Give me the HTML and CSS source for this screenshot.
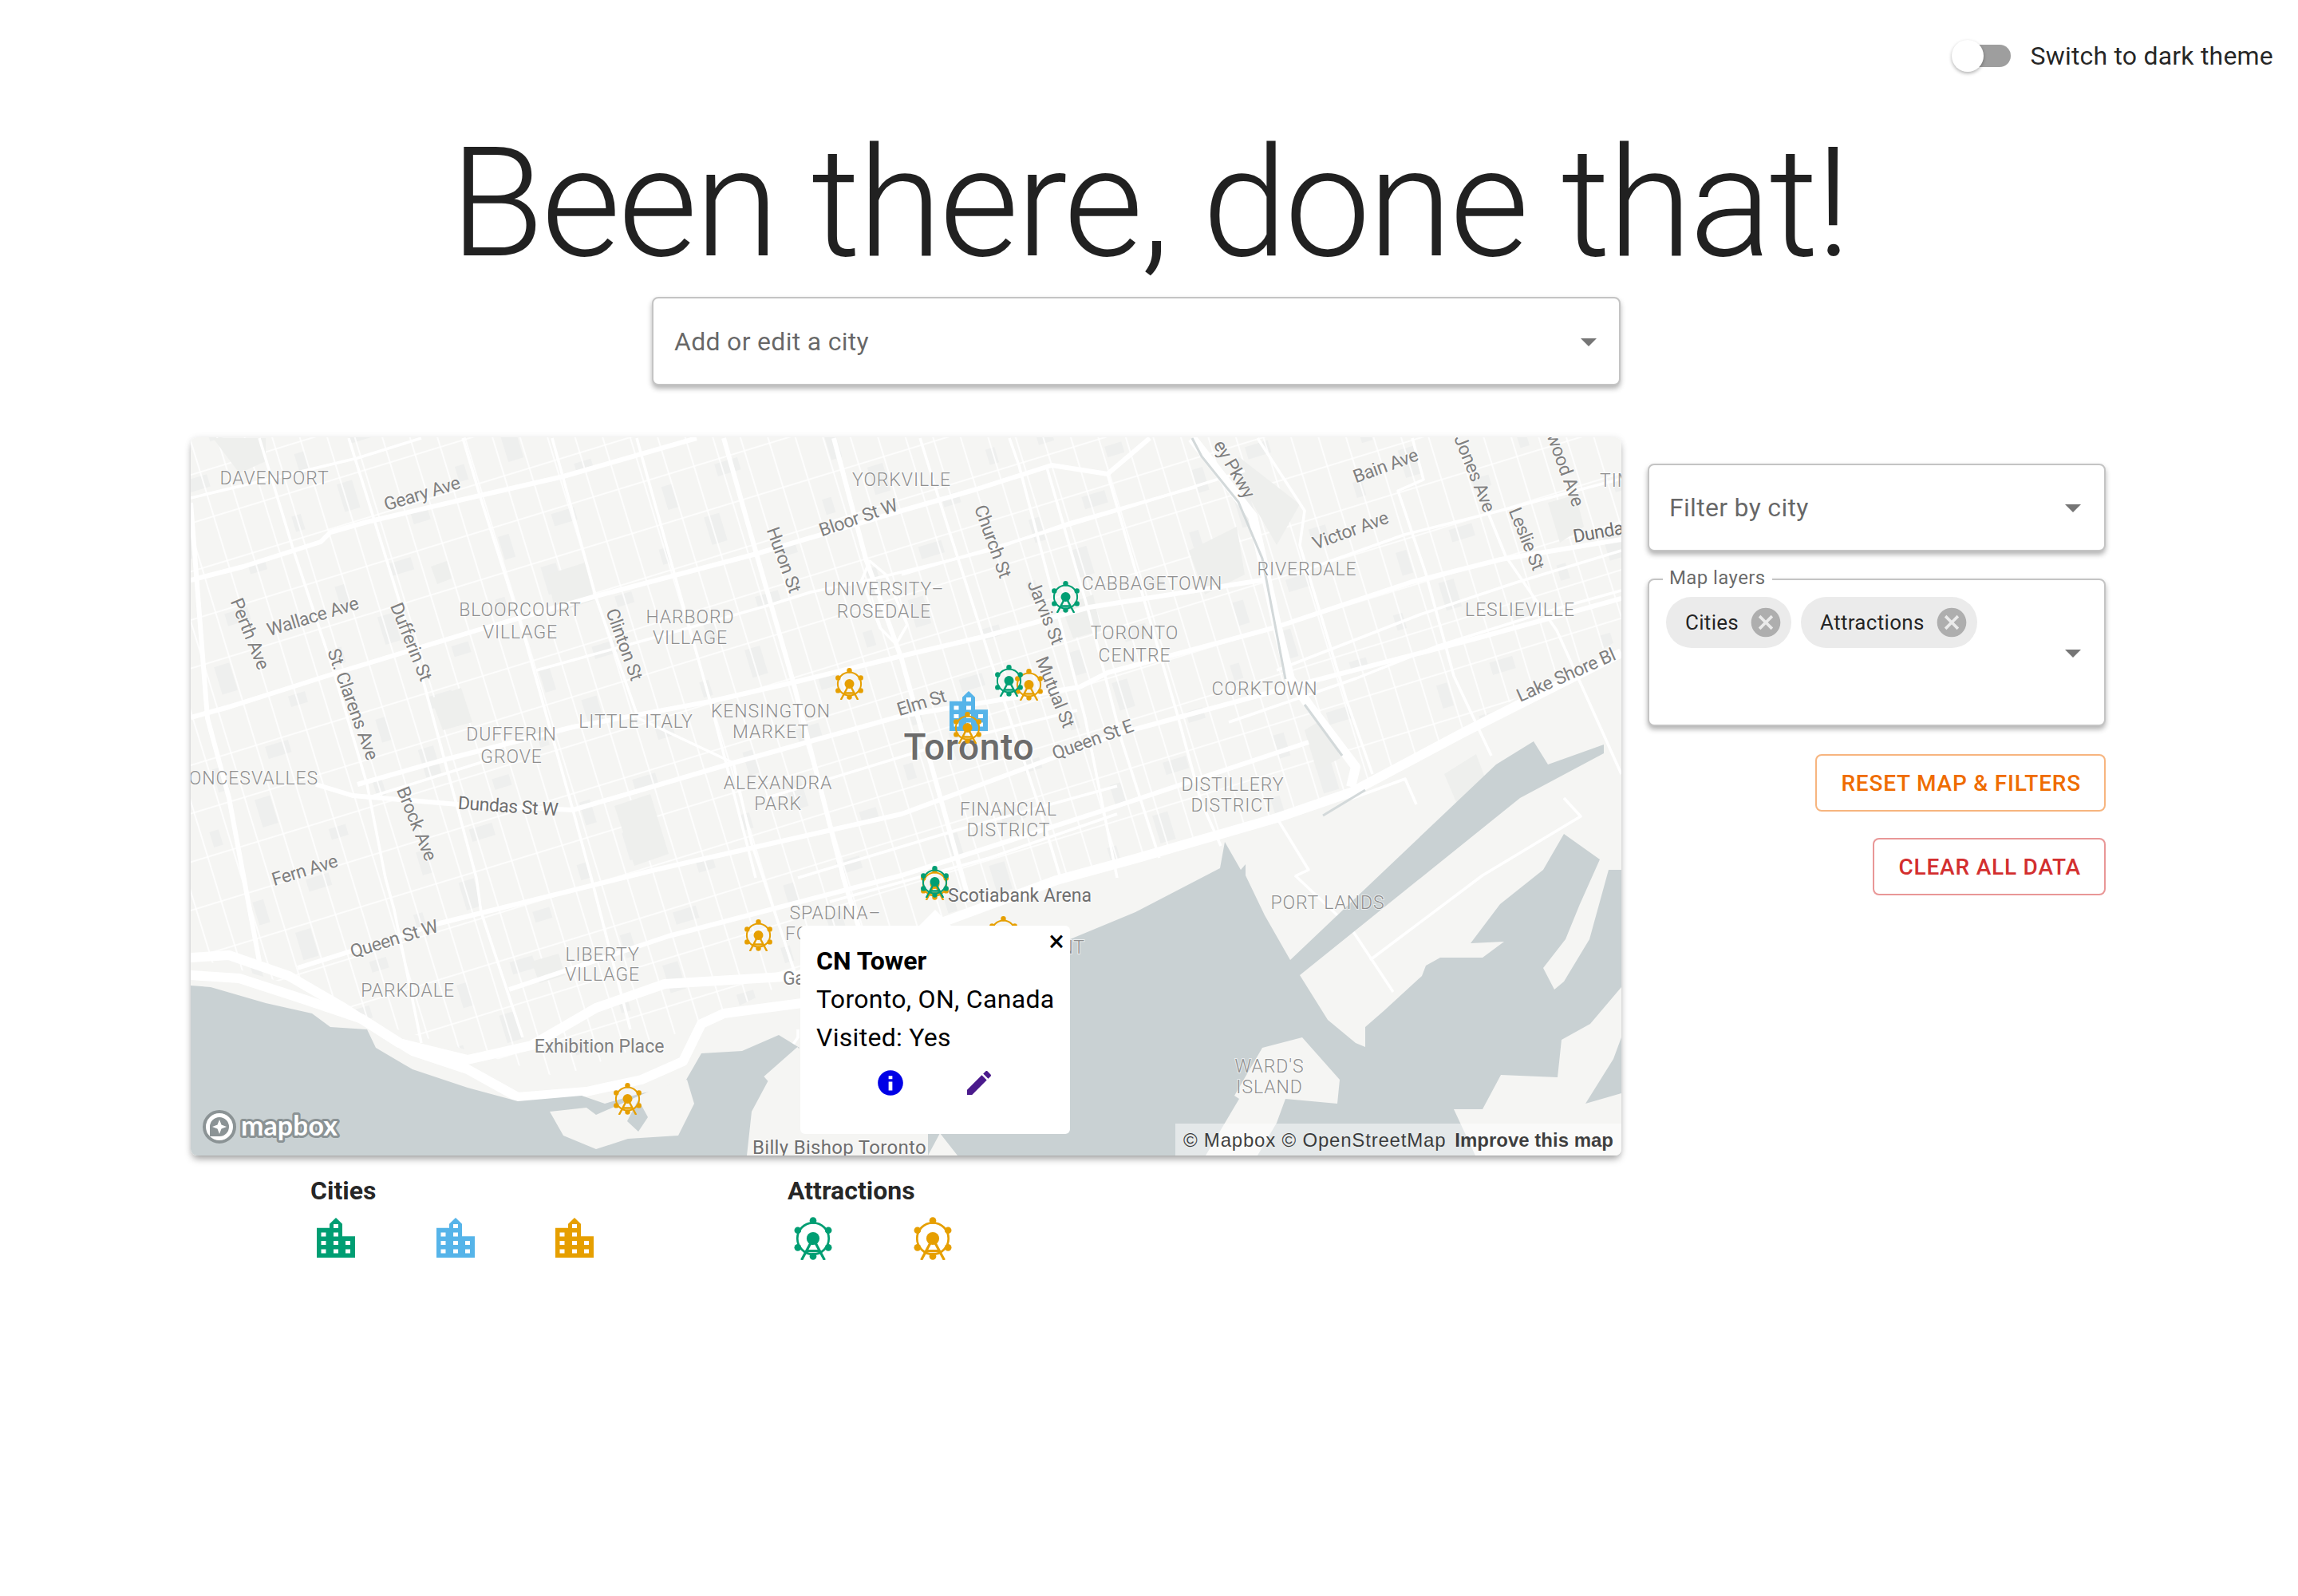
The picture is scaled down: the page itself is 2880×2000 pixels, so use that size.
FILE: index.html
```html
<!DOCTYPE html>
<!-- Been there, done that! travel map -->
<html>
<head>
    <title>Been there, done that!</title>
    <link rel="stylesheet" href="styles.css">
</head>
<body>
    <!-- shared icons -->
    <svg class="defs" width="0" height="0">
        <symbol id="city" viewBox="0 0 48 50">
            <path fill="currentColor" d="M24 0l8 7.7V12.7V23.3H48V50H0V12.7H16V7.7z"/>
            <g fill="#fff">
                <rect x="21" y="8" width="6" height="5"/>
                <rect x="5.5" y="18.5" width="6" height="5"/><rect x="21" y="18.5" width="6" height="5"/>
                <rect x="5.5" y="29" width="6" height="5"/><rect x="21" y="29" width="6" height="5"/><rect x="36" y="29" width="6" height="5"/>
                <rect x="5.5" y="39.5" width="6" height="5"/><rect x="21" y="39.5" width="6" height="5"/><rect x="36" y="39.5" width="6" height="5"/>
            </g>
        </symbol>
        <symbol id="ferris" viewBox="0 0 35 40">
            <circle cx="17.5" cy="20" r="14.6" fill="none" stroke="currentColor" stroke-width="2"/>
            <g fill="currentColor">
                <circle cx="17.5" cy="20" r="6"/>
                <circle cx="17.5" cy="3.3" r="3.2"/><circle cx="3.3" cy="12.4" r="3.2"/><circle cx="31.7" cy="12.4" r="3.2"/>
                <circle cx="3.3" cy="28.4" r="3.2"/><circle cx="31.7" cy="28.4" r="3.2"/><circle cx="17.5" cy="36.6" r="3.2"/>
            </g>
            <path fill="none" stroke="currentColor" stroke-width="2.4" d="M17.5 20L6.8 40M17.5 20L28.2 40M11 31.5H24"/>
        </symbol>
        <symbol id="drop" viewBox="0 0 24 24"><path fill="currentColor" d="M7 10l5 5 5-5z"/></symbol>
        <symbol id="cancel" viewBox="0 0 24 24"><path fill="currentColor" d="M12 2C6.47 2 2 6.47 2 12s4.47 10 10 10 10-4.47 10-10S17.53 2 12 2zm5 13.59L15.59 17 12 13.41 8.41 17 7 15.59 10.59 12 7 8.41 8.41 7 12 10.59 15.59 7 17 8.41 13.41 12 17 15.59z"/></symbol>
    </svg>

    <div class="top-bar">
        <div class="switch"><span class="switch-track"></span><span class="switch-thumb"></span></div>
        <span class="switch-label">Switch to dark theme</span>
    </div>

    <h1>Been there, done that!</h1>

    <div class="search-row">
        <div class="select select-city">
            <span>Add or edit a city</span>
            <svg class="arrow"><use href="#drop"/></svg>
        </div>
    </div>

    <div class="main">
        <div class="left">
            <div class="map">
                <svg class="map-svg" viewBox="239 548 1793 900" width="1793" height="900">
                    <defs>
                        <pattern id="streets" width="33" height="58" patternUnits="userSpaceOnUse" patternTransform="rotate(-17)">
                            <path d="M0 1H33M1 0V58" stroke="#fff" stroke-width="1.6" fill="none"/>
                        </pattern>
                        <pattern id="lots" width="214" height="174" patternUnits="userSpaceOnUse" patternTransform="rotate(-17)">
                            <rect x="12" y="8" width="20" height="36" fill="#eeefee"/>
                            <rect x="90" y="70" width="22" height="14" fill="#eeefee"/>
                            <rect x="160" y="30" width="12" height="20" fill="#eeefee"/>
                            <rect x="44" y="122" width="30" height="16" fill="#eeefee"/>
                            <rect x="186" y="130" width="14" height="30" fill="#eeefee"/>
                        </pattern>
                    </defs>

                    <rect class="land" x="239" y="548" width="1793" height="900"/>
                    <!-- street grid, everything north of the expressway -->
                    <polygon fill="url(#lots)" points="239,548 2032,548 2032,800 1693,993 1324,1103 1003,1223 880,1283 700,1350 454,1277 374,1237 293,1213 239,1200"/>
                    <polygon fill="url(#streets)" points="239,548 2032,548 2032,800 1693,993 1324,1103 1003,1223 880,1283 700,1350 454,1277 374,1237 293,1213 239,1200"/>

                    <!-- parks and big blocks -->
                    <polygon class="park" points="267,549 333,549 333,578 300,593"/>
                    <polygon class="park" points="686,720 733,705 745,752 696,768"/>
                    <polygon class="park" points="540,710 560,703 566,725 548,732"/>
                    <polygon class="park" points="540,875 578,862 592,905 555,915"/>
                    <polygon class="park" points="770,1010 815,995 838,1070 795,1085"/>
                    <polygon class="park" points="666,1205 700,1195 708,1222 676,1232"/>
                    <polygon class="park" points="1552,572 1629,632 1600,683 1552,600"/>
                    <polygon class="park" points="1490,690 1550,660 1560,720 1510,745"/>
                    <polygon class="park" points="1330,760 1370,745 1380,790 1345,800"/>
                    <polygon class="park" points="1940,630 1975,620 1985,660 1955,680"/>
                    <polygon class="park" points="1810,970 1850,945 1865,985 1825,1005"/>
                    <polygon class="park" points="1635,915 1660,900 1680,950 1650,965"/>

                    <!-- minor roads -->
                    <g class="road-minor">
                        <path d="M239,624 448,574 528,549"/>
                        <path d="M672,840 827,797 965,758 1016,742 1080,729 1240,690 1340,655 1500,610"/>
                        <path d="M1130,720 1300,670 1400,640 1560,590"/>
                        <path d="M460,1000 620,950"/>
                        <path d="M325,549 368,690 419,844 460,983 483,1100 494,1140 528,1307"/>
                        <path d="M437,549 471,658 523,826 557,952 597,1100 603,1143 655,1300"/>
                        <path d="M580,549 603,626 655,790 718,1015 741,1100 790,1290"/>
                        <path d="M692,549 747,749 800,900 919,956"/>
                        <path d="M919,956 942,1057 999,1227"/>
                        <path d="M798,549 844,715 890,879 947,1100"/>
                        <path d="M1153,549 1177,626 1241,826 1300,1004 1329,1100"/>
                        <path d="M1265,549 1277,583 1360,900 1400,1100"/>
                        <path d="M1312,586 1365,769 1406,929 1453,1075"/>
                        <path d="M1388,594 1476,897 1505,1004 1530,1060"/>
                        <path d="M1576,549 1635,640 1629,683 1687,876 1720,970"/>
                        <path d="M1770,549 1784,601 1752,615 1787,719 1822,847 1869,947"/>
                        <path d="M1864,640 1887,697 1951,790 2032,970"/>
                        <path d="M1620,720 1760,670 1880,640 2032,600"/>
                        <path d="M1600,840 1780,770 1900,730 2032,690"/>
                        <path d="M1540,905 1700,850 1800,810 1960,760 2032,740"/>
                        <path d="M1090,703 1080,727 1103,787 1123,807 1137,783 1110,720z"/>
                        <path d="M1000,1100 1200,1040 1400,985"/>
                        <path d="M1040,1130 1240,1075 1400,1020"/>
                        <path d="M960,1000 1190,930 1350,890"/>
                        <path d="M1623,1097 1693,1163 1746,1243"/>
                        <path d="M1599,1023 1640,1090 1623,1098"/>
                        <path d="M1717,1203 1858,1097 1981,1023 1960,1000"/>
                        <path d="M1775,1008 1761,976 1693,1001"/>
                        <path d="M1000,1290 1000,1300 965,1350"/>
                    </g>

                    <!-- arterials -->
                    <g class="road-mid">
                        <path d="M239,727 305,710 402,679 414,667 460,654 597,622 706,597 873,549"/>
                        <path d="M239,899 287,886 419,844 597,790 747,747 948,694 1130,640 1224,613 1318,583 1388,594 1441,549"/>
                        <path d="M448,983 557,952 718,911 890,879 999,854 1130,822 1236,797 1365,761 1588,726"/>
                        <path d="M396,983 442,997 574,1008 718,1015 919,956 1130,897 1353,861 1388,843 1599,786 1770,729 1881,701 2032,676"/>
                        <path d="M373,1213 551,1157 821,1090 1130,1020 1400,920 1620,860 1850,800 2032,750"/>
                        <path d="M638,1240 838,1173 1130,1097 1400,1010 1640,930"/>
                        <path d="M907,549 948,694 994,854 1057,1100 1085,1190"/>
                        <path d="M1045,549 1085,700 1130,826 1215,1130"/>
                        <path d="M239,630 260,900 287,1000 325,1205"/>
                    </g>

                    <!-- expressways -->
                    <g class="road-high">
                        <path d="M239,1222 300,1226 380,1252 454,1277 517,1317 586,1340 649,1375 735,1368 804,1353 856,1330 879,1283 907,1270 1005,1257"/>
                        <path d="M239,1200 287,1197 362,1223 431,1263 500,1307 586,1328 666,1310 747,1263 833,1233 999,1223 1324,1103 1423,1076 1600,1025 1693,993 1834,918 2032,818"/>
                        <path d="M1494,549 1570,647 1600,783 1617,851 1640,883 1699,961 1693,986"/>
                    </g>

                    <!-- don river -->
                    <path class="river" d="M1494,549 1506,572 1552,629 1582,700 1611,851"/>
                    <path class="river" d="M1635,883 1682,947"/>
                    <path class="river" d="M1658,1022 1711,990"/>

                    <!-- the lake -->
                    <polygon class="water" points="239,1235 264,1237 333,1257 391,1270 414,1287 460,1290 471,1313 517,1340 586,1363 649,1380 729,1373 758,1383 804,1370 856,1360 879,1320 930,1317 976,1297 1002,1313 965,1350 942,1393 936,1448 239,1448"/>
                    <polygon class="water" points="1341,1177 1423,1143 1529,1088 1535,1055 1555,1090 1561,1083 1561,1097 1585,1147 1617,1203 1875,958 1922,929 1940,958 2010,933 2010,944 1905,1000 1629,1222 1664,1278 1699,1307 1711,1312 1711,1287 1734,1267 1782,1223 1787,1210 1805,1200 1858,1200 1885,1180 1843,1182 1880,1133 1934,1090 1960,1045 2005,1077 1980,1133 1962,1177 1934,1213 1948,1240 1960,1230 1992,1177 2016,1090 2032,1090 2032,1237 1993,1283 1957,1303 1952,1350 1881,1347 1858,1390 1822,1390 1849,1448 1200,1448 1178,1420 1163,1448 1163,1421 1170,1300"/>
                    <polygon class="water" points="1987,1383 2022,1327 2032,1300 2032,1370"/>

                    <!-- islands -->
                    <polygon class="land" points="689,1393 735,1388 747,1397 815,1367 861,1353 870,1383 850,1423 787,1427 747,1440 706,1423"/>
                    <polygon class="water" points="786,1405 800,1378 812,1400 800,1418"/>
                    <polygon class="land" points="1547,1373 1582,1313 1632,1300 1679,1353 1676,1383 1611,1377 1600,1407 1576,1448 1511,1448 1553,1377"/>
                    <path class="road-pier" d="M1002,1315 960,1352"/>

                    <!-- neighbourhoods -->
                    <g class="hood">
                        <text x="344" y="607">DAVENPORT</text>
                        <text x="1130" y="609">YORKVILLE</text>
                        <text x="1108" y="746">UNIVERSITY–</text>
                        <text x="1108" y="774">ROSEDALE</text>
                        <text x="1444" y="739">CABBAGETOWN</text>
                        <text x="1638" y="721">RIVERDALE</text>
                        <text x="1905" y="772">LESLIEVILLE</text>
                        <text class="start" x="2005" y="610">TIM</text>
                        <text x="652" y="772">BLOORCOURT</text>
                        <text x="652" y="800">VILLAGE</text>
                        <text x="865" y="781">HARBORD</text>
                        <text x="865" y="807">VILLAGE</text>
                        <text x="1422" y="801">TORONTO</text>
                        <text x="1422" y="829">CENTRE</text>
                        <text x="966" y="899">KENSINGTON</text>
                        <text x="966" y="925">MARKET</text>
                        <text x="797" y="912">LITTLE ITALY</text>
                        <text x="641" y="928">DUFFERIN</text>
                        <text x="641" y="956">GROVE</text>
                        <text x="1585" y="871">CORKTOWN</text>
                        <text x="399" y="983" class="end">ONCESVALLES</text>
                        <text x="975" y="989">ALEXANDRA</text>
                        <text x="975" y="1015">PARK</text>
                        <text x="1264" y="1022">FINANCIAL</text>
                        <text x="1264" y="1048">DISTRICT</text>
                        <text x="1545" y="991">DISTILLERY</text>
                        <text x="1545" y="1017">DISTRICT</text>
                        <text x="1047" y="1152">SPADINA–</text>
                        <text class="start" x="984" y="1178">FO</text>
                        <text x="1664" y="1139">PORT LANDS</text>
                        <text x="755" y="1204">LIBERTY</text>
                        <text x="755" y="1229">VILLAGE</text>
                        <text x="511" y="1249">PARKDALE</text>
                        <text x="1591" y="1344">WARD'S</text>
                        <text x="1591" y="1370">ISLAND</text>
                        <text x="1360" y="1195" class="end">NT</text>
                    </g>

                    <!-- streets -->
                    <g class="street">
                        <text transform="translate(531 626) rotate(-17)">Geary Ave</text>
                        <text transform="translate(1078 656) rotate(-19)">Bloor St W</text>
                        <text transform="translate(394 780) rotate(-17)">Wallace Ave</text>
                        <text transform="translate(306 797) rotate(68)">Perth Ave</text>
                        <text transform="translate(508 807) rotate(68)">Dufferin St</text>
                        <text transform="translate(435 885) rotate(70)">St. Clarens Ave</text>
                        <text transform="translate(775 810) rotate(70)">Clinton St</text>
                        <text transform="translate(975 704) rotate(70)">Huron St</text>
                        <text transform="translate(1237 681) rotate(70)">Church St</text>
                        <text transform="translate(1303 770) rotate(68)">Jarvis St</text>
                        <text transform="translate(1315 870) rotate(68)">Mutual St</text>
                        <text transform="translate(1157 888) rotate(-17)">Elm St</text>
                        <text transform="translate(1372 934) rotate(-20)">Queen St E</text>
                        <text class="dark" transform="translate(636 1018) rotate(4)">Dundas St W</text>
                        <text transform="translate(515 1035) rotate(68)">Brock Ave</text>
                        <text transform="translate(384 1098) rotate(-17)">Fern Ave</text>
                        <text transform="translate(496 1184) rotate(-17)">Queen St W</text>
                        <text class="poi" x="751" y="1319">Exhibition Place</text>
                        <text class="poi dark" x="1278" y="1130">Scotiabank Arena</text>
                        <text class="poi wide dark" x="1052" y="1446">Billy Bishop Toronto</text>
                        <text class="start" x="981" y="1234">Ga</text>
                        <text class="start" transform="translate(1905 880) rotate(-24)">Lake Shore Bl</text>
                        <text class="start dark" transform="translate(1973 680) rotate(-10)">Dunda</text>
                        <text transform="translate(1906 678) rotate(68)">Leslie St</text>
                        <text transform="translate(1841 596) rotate(68)">Jones Ave</text>
                        <text class="end" transform="translate(1971 636) rotate(70)">wood Ave</text>
                        <text transform="translate(1695 672) rotate(-20)">Victor Ave</text>
                        <text transform="translate(1739 591) rotate(-20)">Bain Ave</text>
                        <text class="end" transform="translate(1560 626) rotate(60)">ey Pkwy</text>
                    </g>
                    <text class="city-label" x="1214" y="952" textLength="163">Toronto</text>

                    <!-- markers -->
                    <use class="c-green" href="#ferris" x="1318" y="728" width="35" height="40"/>
                    <use class="c-orange" href="#ferris" x="1047" y="837" width="35" height="40"/>
                    <use class="c-orange" href="#ferris" x="1272" y="838" width="35" height="40"/>
                    <use class="c-green" href="#ferris" x="1247" y="833" width="35" height="40"/>
                    <use class="c-blue" href="#city" x="1190" y="866" width="48" height="50"/>
                    <use class="c-orange" href="#ferris" x="1195" y="892" width="35" height="40"/>
                    <use class="c-orange" href="#ferris" x="1154" y="1088" width="35" height="40"/>
                    <use class="c-green" href="#ferris" x="1154" y="1085" width="35" height="40"/>
                    <use class="c-orange" href="#ferris" x="933" y="1152" width="35" height="40"/>
                    <use class="c-orange" href="#ferris" x="1240" y="1148" width="35" height="40"/>
                    <use class="c-orange" href="#ferris" x="769" y="1357" width="35" height="40"/>

                    <!-- mapbox logo -->
                    <circle class="logo-ring" cx="275" cy="1412" r="19"/>
                    <path class="logo-mark" d="M263 1424v-12a12 12 0 1 1 12 12zM275 1403l-2.500 6.500-6.500 2.500 6.500 2.500 2.500 6.500 2.500-6.500 6.500-2.500-6.500-2.500z"/>
                    <text class="logo-word" x="302" y="1423" textLength="121">mapbox</text>
                </svg>

                <div class="attribution">
                    <span>© Mapbox © OpenStreetMap</span>
                    <b>Improve this map</b>
                </div>

                <div class="popup">
                    <span class="popup-tip"></span>
                    <span class="popup-close">×</span>
                    <div class="popup-title">CN Tower</div>
                    <div>Toronto, ON, Canada</div>
                    <div>Visited: Yes</div>
                    <div class="popup-actions">
                        <svg class="icon-info" viewBox="0 0 24 24"><path fill="currentColor" d="M12 2C6.48 2 2 6.48 2 12s4.48 10 10 10 10-4.48 10-10S17.52 2 12 2zm1.5 16h-3v-7h3v7zm0-9h-3V6.500h3V9z"/></svg>
                        <svg class="icon-edit" viewBox="0 0 24 24"><path fill="currentColor" d="M3 17.25V21h3.750L17.810 9.940l-3.750-3.750L3 17.250zM20.710 7.040c.39-.39.39-1.020 0-1.410l-2.340-2.340c-.39-.39-1.020-.39-1.410 0l-1.830 1.830 3.750 3.750 1.830-1.830z"/></svg>
                    </div>
                </div>
            </div>

            <div class="legend">
                <div class="legend-group">
                    <div class="legend-title">Cities</div>
                    <div class="legend-icons">
                        <span class="legend-cell"><svg class="legend-city c-green"><use href="#city"/></svg></span>
                        <span class="legend-cell"><svg class="legend-city c-blue"><use href="#city"/></svg></span>
                        <span class="legend-cell"><svg class="legend-city c-orange"><use href="#city"/></svg></span>
                    </div>
                </div>
                <div class="legend-group">
                    <div class="legend-title">Attractions</div>
                    <div class="legend-icons">
                        <span class="legend-cell"><svg class="legend-ferris c-green"><use href="#ferris"/></svg></span>
                        <span class="legend-cell"><svg class="legend-ferris c-orange"><use href="#ferris"/></svg></span>
                    </div>
                </div>
            </div>
        </div>

        <div class="side">
            <div class="select select-filter">
                <span>Filter by city</span>
                <svg class="arrow"><use href="#drop"/></svg>
            </div>
            <div class="select select-layers">
                <span class="layers-label">Map layers</span>
                <div class="chips">
                    <span class="chip">Cities<svg class="chip-x"><use href="#cancel"/></svg></span>
                    <span class="chip">Attractions<svg class="chip-x"><use href="#cancel"/></svg></span>
                </div>
                <svg class="arrow"><use href="#drop"/></svg>
            </div>
            <button class="btn btn-reset">RESET MAP &amp; FILTERS</button>
            <button class="btn btn-clear">CLEAR ALL DATA</button>
        </div>
    </div>
</body>
</html>
```

FILE: styles.css
```css
body {
    margin: 0;
    background: #fff;
    color: rgba(0, 0, 0, 0.87);
    font-family: Roboto, sans-serif;
}

.defs { position: absolute; }

/* Top bar */
.top-bar {
    display: flex;
    justify-content: flex-end;
    align-items: center;
    height: 140px;
    padding-right: 31px;
}
.switch {
    position: relative;
    width: 68px;
    height: 28px;
    margin-right: 25px;
}
.switch-track {
    display: block;
    height: 28px;
    border-radius: 14px;
    background: #9e9e9e;
}
.switch-thumb {
    position: absolute;
    left: -6px;
    top: -6px;
    width: 40px;
    height: 40px;
    border-radius: 50%;
    background: #fff;
    box-shadow: 0 2px 4px rgba(0, 0, 0, 0.3);
}
.switch-label {
    font-size: 32px;
    letter-spacing: 0.2px;
}

h1 {
    margin: 3px 0 5px;
    font-size: 192px;
    font-weight: 300;
    line-height: 224px;
    letter-spacing: -3.2px;
    text-align: center;
}

/* Selects */
.select {
    position: relative;
    display: flex;
    align-items: center;
    justify-content: space-between;
    box-sizing: border-box;
    background: #fff;
    border: 2px solid #c4c4c4;
    border-radius: 8px;
    box-shadow: 0 4px 6px rgba(0, 0, 0, 0.3);
    font-size: 32px;
    color: rgba(0, 0, 0, 0.6);
    letter-spacing: 0.3px;
}
.search-row {
    display: flex;
    padding-left: 817px;
}
.select-city {
    width: 1214px;
    height: 111px;
    padding: 0 14px 0 26px;
}
.select-filter {
    height: 110px;
    padding: 0 15px 0 25px;
}
.select-layers {
    height: 185px;
    margin-top: 34px;
    padding: 21px 15px 0 21px;
    align-items: flex-start;
}
.arrow {
    width: 48px;
    height: 48px;
    color: #757575;
}
.select-layers .arrow { margin-top: 46px; }

.layers-label {
    position: absolute;
    left: 17px;
    top: -19px;
    padding: 0 8px 0 8px;
    background: #fff;
    font-size: 24px;
    line-height: 32px;
    letter-spacing: 0.4px;
}
.chips {
    display: flex;
    gap: 12px;
}
.chip {
    display: flex;
    align-items: center;
    height: 64px;
    padding-left: 24px;
    border-radius: 32px;
    background: #ebebeb;
    color: rgba(0, 0, 0, 0.87);
    font-size: 26px;
    letter-spacing: 0.3px;
}
.chip-x {
    width: 44px;
    height: 44px;
    margin: 0 10px 0 12px;
    color: rgba(0, 0, 0, 0.26);
}

/* Main row */
.main {
    display: flex;
    gap: 33px;
    padding-left: 239px;
    margin-top: 65px;
}
.left { width: 1793px; }
.side {
    display: flex;
    flex-direction: column;
    align-items: flex-end;
    width: 574px;
    padding-top: 33px;
}
.side .select { width: 100%; }

.btn {
    height: 72px;
    padding: 0 29px 0 30px;
    background: #fff;
    border-radius: 8px;
    font-family: Roboto, sans-serif;
    font-size: 28px;
    font-weight: 500;
    letter-spacing: 0.8px;
}
.btn-reset {
    margin-top: 35px;
    border: 2px solid rgba(239, 108, 0, 0.5);
    color: #ef6c00;
}
.btn-clear {
    margin-top: 33px;
    border: 2px solid rgba(211, 47, 47, 0.5);
    color: #d32f2f;
}

/* Map */
.map {
    position: relative;
    width: 1793px;
    height: 900px;
    border-radius: 8px;
    overflow: hidden;
    box-shadow: 0 6px 10px -2px rgba(0, 0, 0, 0.35), 0 0 8px rgba(0, 0, 0, 0.08);
}
.map-svg { display: block; }

.land { fill: #f5f5f3; }
.park { fill: #eeefed; }
.water { fill: #c9d1d3; }
.river { fill: none; stroke: #d3d9da; stroke-width: 3; }

.road-minor, .road-mid, .road-high, .road-pier {
    fill: none;
    stroke: #fff;
    stroke-linejoin: round;
}
.road-minor { stroke-width: 3.5; }
.road-mid { stroke-width: 6; }
.road-high { stroke-width: 12; }
.road-pier { stroke-width: 8; stroke: #f5f5f3; }

.hood text {
    font-size: 23px;
    font-weight: 300;
    letter-spacing: 0.9px;
    fill: #8f8f8f;
    text-anchor: middle;
    stroke: #fff;
    stroke-width: 2px;
    stroke-opacity: 0.6;
    paint-order: stroke;
}
.street text {
    font-size: 23px;
    letter-spacing: -0.5px;
    fill: #808080;
    text-anchor: middle;
    stroke: #fff;
    stroke-width: 2px;
    stroke-opacity: 0.6;
    paint-order: stroke;
}
.street text.dark { fill: #6f6f6f; }
.street text.poi { letter-spacing: 0; }
.street text.wide { font-size: 24px; letter-spacing: 0.3px; }
.hood text.start, .street text.start { text-anchor: start; }
.hood text.end, .street text.end { text-anchor: end; }

.city-label {
    font-size: 46px;
    font-weight: 500;
    fill: #6b6b6b;
    text-anchor: middle;
    stroke: #fff;
    stroke-width: 3px;
    stroke-opacity: 0.6;
    paint-order: stroke;
}

.c-green { color: #009e73; }
.c-blue { color: #56b4e9; }
.c-orange { color: #e69f00; }

.logo-ring { fill: #fff; stroke: #8b9395; stroke-width: 4; }
.logo-mark { fill: #8b9395; fill-rule: evenodd; }
.logo-word {
    font-family: Lato, sans-serif;
    font-size: 34px;
    font-weight: 700;
    fill: #fff;
    stroke: #8b9395;
    stroke-width: 6px;
    stroke-linejoin: round;
    paint-order: stroke;
}

.attribution {
    position: absolute;
    right: 0;
    bottom: 0;
    display: flex;
    gap: 11px;
    align-items: center;
    box-sizing: border-box;
    height: 40px;
    padding: 2px 10px 0;
    background: rgba(255, 255, 255, 0.5);
    font-family: "Liberation Sans", sans-serif;
    font-size: 24px;
    color: rgba(0, 0, 0, 0.75);
}
.attribution span { letter-spacing: 0.8px; }

/* Popup */
.popup {
    position: absolute;
    left: 764px;
    top: 612px;
    box-sizing: border-box;
    width: 338px;
    height: 261px;
    padding: 20px 20px 0;
    background: #fff;
    border-radius: 6px;
    font-size: 32px;
    line-height: 48px;
    color: #000;
    letter-spacing: 0.3px;
    white-space: nowrap;
}
.popup-tip {
    position: absolute;
    left: 149px;
    top: -20px;
    border-left: 20px solid transparent;
    border-right: 20px solid transparent;
    border-bottom: 20px solid #fff;
}
.popup-close {
    position: absolute;
    right: 7px;
    top: 0;
    font-size: 36px;
    line-height: 40px;
}
.popup-title { font-weight: 700; letter-spacing: 0; }
.popup-actions {
    display: flex;
    margin: 13px 0 0 74px;
    gap: 72px;
    align-items: center;
}
.icon-info { width: 38px; height: 38px; color: #0000e6; }
.icon-edit { width: 40px; height: 40px; color: #4a1a8c; }

/* Legend */
.legend {
    display: flex;
    padding: 24px 0 0 150px;
}
.legend-group { width: 598px; }
.legend-title {
    font-size: 32px;
    font-weight: 700;
    line-height: 40px;
}
.legend-icons {
    display: flex;
    align-items: center;
    height: 56px;
    margin-top: 12px;
}
.legend-cell {
    display: flex;
    width: 149.500px;
    padding-left: 8px;
    box-sizing: border-box;
}
.legend-city { width: 48px; height: 50px; margin-top: -2px; }
.legend-ferris { width: 48px; height: 54px; }
```
